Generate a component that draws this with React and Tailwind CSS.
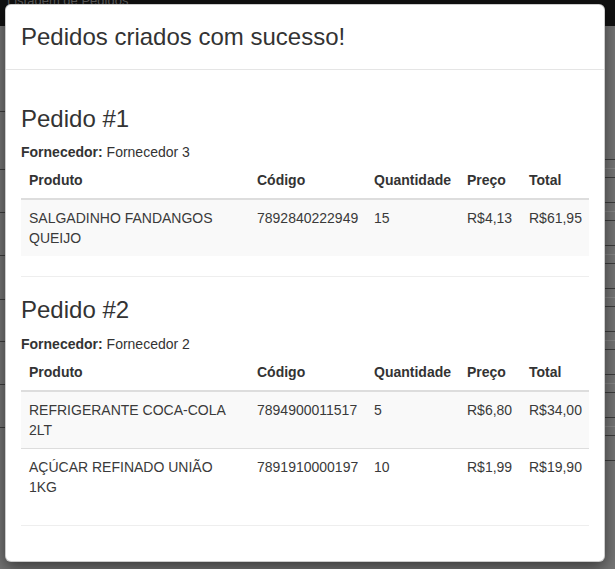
const pedidos = [
  {
    numero: 1,
    fornecedor: "Fornecedor 3",
    itens: [
      { produto: "SALGADINHO FANDANGOS QUEIJO", codigo: "7892840222949", qtd: "15", preco: "R$4,13", total: "R$61,95" },
    ],
  },
  {
    numero: 2,
    fornecedor: "Fornecedor 2",
    itens: [
      { produto: "REFRIGERANTE COCA-COLA 2LT", codigo: "7894900011517", qtd: "5", preco: "R$6,80", total: "R$34,00" },
      { produto: "AÇÚCAR REFINADO UNIÃO 1KG", codigo: "7891910000197", qtd: "10", preco: "R$1,99", total: "R$19,90" },
    ],
  },
];

const leftRows = [58, 43, 43, 44, 42, 43, 43, 43];
const rightGroups = [0, 1, 2, 3, 4, 5, 6];

function Background() {
  return (
    <div className="h-[569px] bg-[#747474]">
      <div className="relative h-[26px] overflow-hidden bg-[#111111]">
        <span className="absolute left-[7px] top-[-9px] text-[13px] text-[#5c5c5c]">Listagem de Pedidos</span>
      </div>
      <div className="flex">
        <div className="w-[300px] pt-[85px]">
          {leftRows.map((h, i) => (
            <div key={i} className="border-t border-[#3c3c3c]" style={{ height: h }} />
          ))}
        </div>
        <div className="flex-1 pt-[133px]">
          {rightGroups.map((g) => (
            <div key={g} className="h-[43px] border-t border-[#3c3c3c]">
              <div className="mt-[8px] border-t border-[#858585]" />
              <div className="mt-[8px] border-t border-[#3c3c3c]" />
            </div>
          ))}
          <div className="border-t border-[#3c3c3c]" />
        </div>
      </div>
    </div>
  );
}

function Pedido({ pedido }) {
  return (
    <div>
      <h3 className="mt-[20px] mb-[10px] text-[24px] leading-[1.1] text-[#333]">Pedido #{pedido.numero}</h3>
      <p className="text-[14px] leading-[20px]">
        <strong className="font-bold">Fornecedor:</strong> {pedido.fornecedor}
      </p>
      <table className="w-full table-fixed border-collapse text-left text-[14px] leading-[20px]">
        <colgroup>
          <col className="w-[228px]" />
          <col className="w-[117px]" />
          <col className="w-[93px]" />
          <col className="w-[62px]" />
          <col className="w-[68px]" />
        </colgroup>
        <thead>
          <tr className="border-b-2 border-[#dddddd]">
            <th className="p-[8px] font-bold">Produto</th>
            <th className="p-[8px] font-bold">Código</th>
            <th className="p-[8px] font-bold">Quantidade</th>
            <th className="p-[8px] font-bold">Preço</th>
            <th className="p-[8px] font-bold">Total</th>
          </tr>
        </thead>
        <tbody className="text-[#3a3a3a]">
          {pedido.itens.map((item, i) => (
            <tr key={item.codigo} className={i % 2 === 0 ? "bg-[#f9f9f9]" : "border-t border-[#dddddd]"}>
              <td className="p-[8px] align-top">{item.produto}</td>
              <td className="p-[8px] align-top">{item.codigo}</td>
              <td className="p-[8px] align-top">{item.qtd}</td>
              <td className="p-[8px] align-top">{item.preco}</td>
              <td className="p-[8px] align-top">{item.total}</td>
            </tr>
          ))}
        </tbody>
      </table>
      <hr className="my-[20px] border-t border-[#eeeeee]" />
    </div>
  );
}

export default function App() {
  return (
    <div className="relative h-[569px] w-full overflow-hidden text-[#333] font-['Liberation_Sans',Arial,sans-serif]">
      <Background />
      <div className="absolute left-[5px] top-[4px] w-[600px] rounded-[6px] border border-black/20 bg-white shadow-[0_5px_15px_rgba(0,0,0,0.5)]">
        <div className="border-b border-[#e5e5e5] p-[15px]">
          <h4 className="text-[24px] leading-[34px] text-[#333]">Pedidos criados com sucesso!</h4>
        </div>
        <div className="px-[15px] pt-[16px] pb-[15px]">
          {pedidos.map((p) => (
            <Pedido key={p.numero} pedido={p} />
          ))}
        </div>
      </div>
    </div>
  );
}
